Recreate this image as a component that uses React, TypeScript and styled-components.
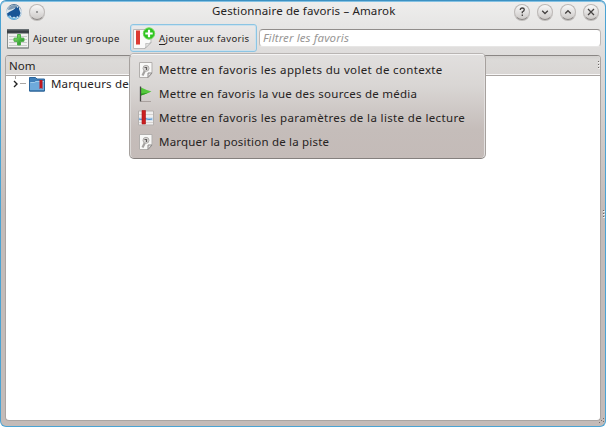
import React from "react";
import styled, { createGlobalStyle } from "styled-components";

const GlobalStyle = createGlobalStyle`
  * { box-sizing: border-box; }
  body { margin: 0; background: #fff; font-family: "Noto Sans", "Open Sans", sans-serif; color: #262322; }
`;

const Window = styled.div`
  position: relative;
  width: 606px;
  height: 427px;
  display: flex;
  flex-direction: column;
  border: 1px solid #4ba3d3;
  border-top: 1px solid #3c91c2;
  border-radius: 6px;
  background: linear-gradient(#eeeeed 0, #dfdddc 50px, #d3cecb 120px, #c4bbb8 210px);
  box-shadow: inset 0 1px 0 #83c1e3;
  overflow: hidden;
`;

const TitleBar = styled.header`
  height: 21px;
  margin-bottom: 2px;
  display: flex;
  align-items: center;
  padding: 0 6px 0 5px;
`;

const Label = styled.span<{ $size?: number; $spacing?: number }>`
  font-size: ${(p) => p.$size ?? 11.5}px;
  letter-spacing: ${(p) => p.$spacing ?? 0}px;
  line-height: 16px;
  white-space: pre;
`;

const Title = styled.h1`
  flex: 1;
  margin: -2px 0 0 167px;
  font-size: 11.5px;
  font-weight: 400;
  line-height: 16px;
  letter-spacing: 0.14px;
  white-space: pre;
`;

const WindowButtons = styled.div`
  display: flex;
  gap: 7px;
`;

const RoundButton = styled.button`
  width: 16px;
  height: 16px;
  padding: 0;
  border: 1px solid #bcb8b6;
  border-bottom-color: #8b8785;
  border-radius: 50%;
  background: linear-gradient(#f8f8f8, #cdcac8);
  box-shadow: 0 1px 0 #bebbb9;
  display: grid;
  place-items: center;
`;

const StickyButton = styled(RoundButton)`
  margin-left: 7px;
`;

const Toolbar = styled.div`
  height: 28px;
  display: flex;
  align-items: center;
  padding: 0 4px 0 6px;
`;

const ToolButton = styled.button<{ $active?: boolean; $width: number; $gap: number }>`
  width: ${(p) => p.$width}px;
  height: 28px;
  padding: ${(p) => (p.$active ? "0 0 0 2px" : "2px 0 0")};
  display: flex;
  align-items: center;
  gap: ${(p) => p.$gap}px;
  border: ${(p) => (p.$active ? "1px solid #8cc5e4" : "0")};
  border-radius: 3px;
  background: ${(p) => (p.$active ? "linear-gradient(#ebeaea, #dedbda)" : "none")};
  box-shadow: ${(p) => (p.$active ? "inset 0 0 0 1px #cde1ec" : "none")};
  font-family: inherit;
  color: inherit;
`;

const ActionLabel = styled(Label)`
  padding-top: 1px;
`;

const Mnemonic = styled.span`
  text-decoration: underline;
  text-underline-offset: 2px;
`;

const Filter = styled.input`
  flex: 1;
  min-width: 0;
  height: 18px;
  margin-left: 2px;
  padding: 0 3px 1px;
  border: 1px solid #bdb9b7;
  border-top-color: #918d8b;
  border-bottom-color: #e7e6e5;
  border-radius: 4px;
  background: #fff;
  font: italic 11.5px "Noto Sans", sans-serif;
  letter-spacing: 0.1px;
  outline: 0;
  &::placeholder { color: #999796; opacity: 1; }
`;

const Tree = styled.main`
  flex: 1;
  margin: 3px 4px 5px;
  display: flex;
  flex-direction: column;
  border: 1px solid #aaa5a2;
  border-top-color: #8a8684;
  border-radius: 4px;
  background: #fff;
  overflow: hidden;
`;

const TreeHeader = styled.div`
  height: 20px;
  flex: none;
  display: flex;
  align-items: center;
  justify-content: space-between;
  padding: 0 0 0 3px;
  background: linear-gradient(#d3d0ce, #dcdad8 4px, #d9d6d4);
  border-bottom: 1px solid #aaa5a2;
  box-shadow: inset 0 -1px 0 #f8f7f7;
`;

const TreeRow = styled.div`
  height: 16px;
  display: flex;
  align-items: center;
  padding-left: 6px;
`;

const FolderLabel = styled(Label)`
  margin-left: 6px;
`;

const Menu = styled.ul`
  position: absolute;
  left: 128px;
  top: 53px;
  width: 357px;
  height: 105px;
  margin: 0;
  padding: 3px 0 0 8px;
  list-style: none;
  border: 1px solid #a6a19e;
  border-top: 1px solid #f5f4f4;
  border-bottom: 1px solid #85807e;
  border-radius: 5px;
  background: linear-gradient(#e1dfde, #d9d6d4 30%, #c5bdba 72%, #c4bbb8);
  box-shadow: inset -1px 0 0 #e3e0df, inset 1px 0 0 #dcd9d7, 0 -1px 0 #b9b5b3;
`;

const MenuItem = styled.li`
  height: 24px;
  display: flex;
  align-items: center;
  gap: 5px;
`;

const Grip = styled.div<{ $x: number; $y: number }>`
  position: absolute;
  left: ${(p) => p.$x}px;
  top: ${(p) => p.$y}px;
  line-height: 0;
`;

const AmarokIcon = () => (
  <svg width="16" height="16" viewBox="0 0 16 16">
    <defs>
      <linearGradient id="rim" x1="0" y1="0" x2="0" y2="1">
        <stop offset="0" stopColor="#4d7396" />
        <stop offset=".5" stopColor="#d3dfe8" />
        <stop offset="1" stopColor="#5aa2d2" />
      </linearGradient>
    </defs>
    <circle cx="8" cy="8" r="7.5" fill="#dde7ee" stroke="url(#rim)" />
    <path d="M2.500 4Q6-.5 12 2L9 4 5 5.500 2 6z" fill="#7f9bb4" />
    <path d="M1 9.500 4 7.500 7 6l2-1.500 1-2L11.500 4l1.500-1.500V5l1.500 4-1.500 4-2-1-1 2-2-1.500L6 14l-1.500-2.500L2 13z" fill="#195596" />
    <path d="M1.500 12.500 3.500 11l1.500 3 1.500-1 1.500 1.500 1.500-1.500 2 .5A7 7 0 0 1 1.500 12.500z" fill="#6ab2de" />
  </svg>
);

const AddGroupIcon = () => (
  <svg width="22" height="20" viewBox="0 0 22 20">
    <defs>
      <linearGradient id="bar" x1="0" y1="0" x2="0" y2="1">
        <stop offset="0" stopColor="#777d81" />
        <stop offset=".5" stopColor="#383e43" />
        <stop offset="1" stopColor="#42484c" />
      </linearGradient>
      <linearGradient id="plus" x1="0" y1="0" x2="1" y2="1">
        <stop offset=".2" stopColor="#7bdb62" />
        <stop offset=".7" stopColor="#36a336" />
      </linearGradient>
    </defs>
    <path d="M.5.500h21v18.500H.5z" fill="#f1f1f0" stroke="#8a908f" />
    <path d="M0 0h22v4.500H0z" fill="url(#bar)" />
    <path d="M2 7.500h18M2 10.500h18M2 13.500h18M2 16.500h18" stroke="#c8caca" />
    <path d="M0 19h22" stroke="#7e8381" />
    <path d="M10.500 5.500h3v3.500l3.500.2v3l-3.500.3v3.500h-3v-3.500L7 12.200v-3l3.500-.2z" fill="url(#plus)" stroke="#4cae48" strokeWidth="1" strokeLinejoin="round" />
  </svg>
);

const AddBookmarkIcon = () => (
  <svg width="23" height="23" viewBox="0 0 23 23">
    <path d="M.5 2.500h17.500v13L12 21.500H.5z" fill="#fafafa" stroke="#bbb" />
    <path d="M12 21.500q1.500-2 .7-5 3 .7 5.300-1z" fill="#e9e8e7" stroke="#aaa" strokeWidth=".7" />
    <path d="M3 3h4v15H3z" fill="#dc3b33" />
    <path d="M3 3.500h4M3 17.500h4" stroke="#ef968c" />
    <circle cx="16" cy="6.500" r="5.700" fill="#2fc420" stroke="#70d95c" />
    <path d="M16 2.800v7.400M12.300 6.500h7.400" stroke="#fff" strokeWidth="2.200" />
  </svg>
);

const FolderIcon = () => (
  <svg width="16" height="15" viewBox="0 0 16 15">
    <path d="M.5.500h6l1.500 1.500h7.500v12H.5z" fill="#3f7fb9" stroke="#2c659b" />
    <path d="M1 5h4.500L7 4h8v9.500H1z" fill="#6eaadb" />
    <path d="M1.500 5.500h4L7 4.500h8" fill="none" stroke="#a0cbea" />
    <path d="M10.500 3h3v9l-1.500-1-1.500 1z" fill="#c0161e" />
    <path d="M.5 14h15" stroke="#2a6396" />
  </svg>
);

const PageWrenchIcon = () => (
  <svg width="16" height="16" viewBox="0 0 16 16">
    <path d="M1.500.5h12.500v10.500l-4 4.500H1.500z" fill="#f8f8f7" stroke="#b2afad" />
    <path d="M10 15.500v-4.500h4z" fill="#e4e3e2" stroke="#8d8a89" />
    <path d="M7 8.500 4.500 13.500" stroke="#a4a2a1" strokeWidth="2.200" />
    <circle cx="8" cy="6.300" r="3" fill="#d8d6d5" stroke="#b0aeac" />
    <path d="M6.500 5.500h2V8" fill="none" stroke="#605d5c" strokeWidth="1.200" />
  </svg>
);

const FlagIcon = () => (
  <svg width="16" height="16" viewBox="0 0 16 16">
    <path d="M3 15.500h10" stroke="#aaa29f" />
    <path d="M3 1.500q4 2 10.500 4Q8 8 3 9.500z" fill="#54c83c" />
    <path d="M3 7.500q5 .5 10-2Q8 8 3 9.500z" fill="#2a991e" />
    <path d="M2.500.5v15" stroke="#454644" strokeWidth="1.300" />
  </svg>
);

const PlaylistIcon = () => (
  <svg width="16" height="16" viewBox="0 0 16 16">
    <path d="M.5 1h15v14H.5z" fill="#f1f0f0" stroke="#b5b1af" />
    <path d="M1 4.500h14M1 12.500h14" stroke="#d5d2d0" />
    <path d="M1 7.500h14v3H1z" fill="#c2daef" />
    <path d="M1 9q2 .6 4 0t4 0 5 0" fill="none" stroke="#4f8dc9" strokeWidth="1.200" />
    <path d="M4 .5h3.500v13.500H4z" fill="#cb1e20" stroke="#a91518" strokeWidth=".6" />
  </svg>
);

const Glyph = ({ d }: { d: string }) => (
  <svg width="12" height="12" viewBox="0 0 12 12" fill="none" stroke="#454241" strokeWidth="1.300">
    <path d={d} />
  </svg>
);

const Dots = () => (
  <svg width="3" height="12" viewBox="0 0 3 12">
    {[0, 1, 2].map((n) => (
      <g key={n}>
        <path d={`M1 ${2 + n * 3}h2v1h-2z`} fill="#efedec" />
        <path d={`M1 ${1 + n * 3}h1v1h-1z`} fill="#6e6865" />
      </g>
    ))}
  </svg>
);

const BranchIcon = () => (
  <svg width="17" height="16" viewBox="0 0 17 16" fill="none">
    <path d="M3.500 0v3M8 7.500h6" stroke="#aaa6a4" />
    <path d="m2 5 3 3-3 3" stroke="#222" strokeWidth="1.400" />
  </svg>
);

const actions = [
  { icon: <PageWrenchIcon />, label: "Mettre en favoris les applets du volet de contexte", spacing: 0.36 },
  { icon: <FlagIcon />, label: "Mettre en favoris la vue des sources de média", spacing: 0.25 },
  { icon: <PlaylistIcon />, label: "Mettre en favoris les paramètres de la liste de lecture", spacing: 0.36 },
  { icon: <PageWrenchIcon />, label: "Marquer la position de la piste", spacing: 0.2 },
];

const controls = [
  { name: "Aide", d: "M4.300 4q0-2 2-2t2 1.500Q8.300 5 6.300 6v1.300M6.300 8.500V10" },
  { name: "Réduire", d: "m3.200 4.700 2.800 2.800 2.800-2.800" },
  { name: "Agrandir", d: "m3.200 7.500 2.800-2.800 2.800 2.800" },
  { name: "Fermer", d: "m3 3 6 6m0-6-6 6" },
];

export default function App() {
  return (
    <>
      <GlobalStyle />
      <Window>
        <TitleBar>
          <AmarokIcon />
          <StickyButton aria-label="Épingler">
            <svg width="2" height="2"><path d="M0 0h2v2H0z" fill="#999" /></svg>
          </StickyButton>
          <Title>Gestionnaire de favoris – Amarok</Title>
          <WindowButtons>
            {controls.map((c) => (
              <RoundButton key={c.name} aria-label={c.name}><Glyph d={c.d} /></RoundButton>
            ))}
          </WindowButtons>
        </TitleBar>
        <Toolbar>
          <ToolButton $width={123} $gap={4}>
            <AddGroupIcon />
            <Label $size={9.5} $spacing={0.27}>Ajouter un groupe</Label>
          </ToolButton>
          <ToolButton $active $width={127} $gap={3}>
            <AddBookmarkIcon />
            <ActionLabel $size={9.5} $spacing={0.33}><Mnemonic>A</Mnemonic>jouter aux favoris</ActionLabel>
          </ToolButton>
          <Filter placeholder="Filtrer les favoris" />
        </Toolbar>
        <Tree>
          <TreeHeader>
            <Label>Nom</Label>
            <Dots />
          </TreeHeader>
          <TreeRow>
            <BranchIcon />
            <FolderIcon />
            <FolderLabel $spacing={0.15}>Marqueurs de position</FolderLabel>
          </TreeRow>
        </Tree>
        <Menu>
          {actions.map((a) => (
            <MenuItem key={a.label}>
              {a.icon}
              <Label $spacing={a.spacing}>{a.label}</Label>
            </MenuItem>
          ))}
        </Menu>
        <Grip $x={601} $y={208}><Dots /></Grip>
        <Grip $x={598} $y={417}>
          <svg width="6" height="6"><path d="M4 0h1v1H4zM2 2h1v1H2zM0 4h1v1H0zM4 3h1v1H4z" fill="#746d69" /></svg>
        </Grip>
      </Window>
    </>
  );
}
